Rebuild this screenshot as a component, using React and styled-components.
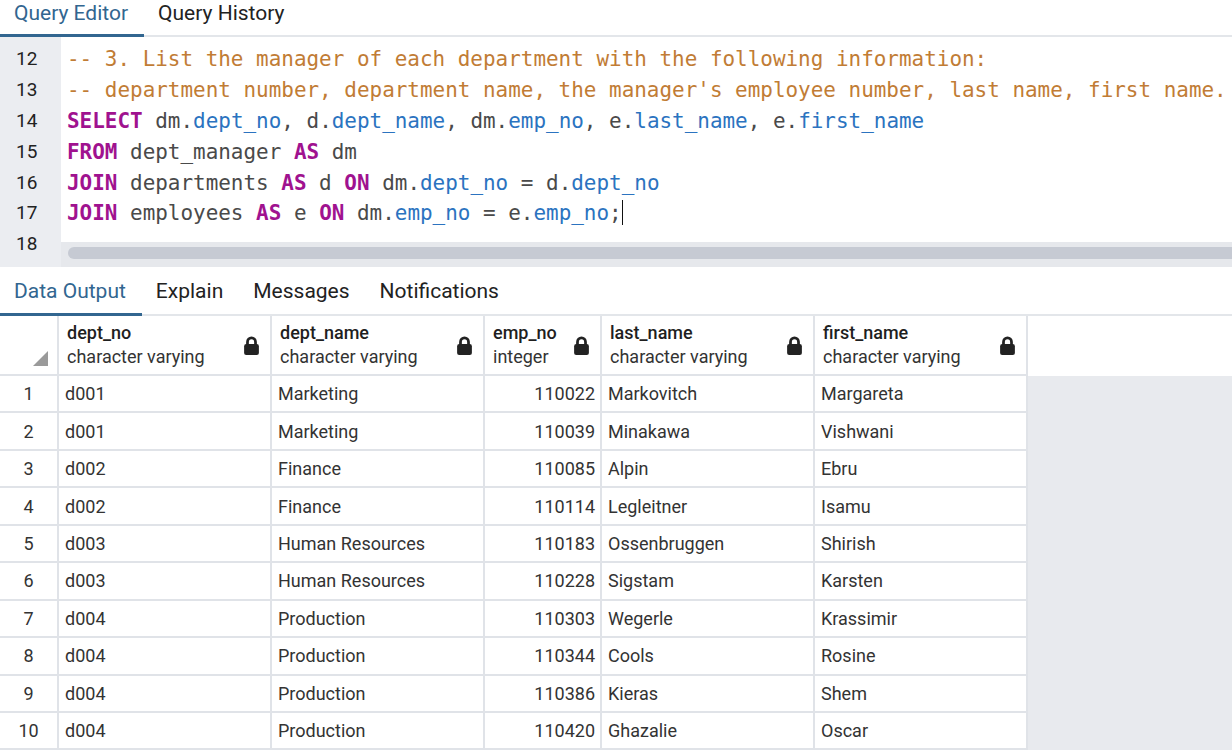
import React from 'react'
import styled, { createGlobalStyle } from 'styled-components'

const Global = createGlobalStyle`
  html, body { margin: 0; padding: 0; background: #fff; }
  body { font-family: Roboto, "Liberation Sans", sans-serif; overflow: hidden; }
  * { box-sizing: border-box; }
`

const Page = styled.div`
  width: 1232px;
  height: 751px;
  overflow: hidden;
  background: #fff;
`

const TabBar = styled.div`
  display: flex;
  border-bottom: 2px solid #e3e6ea;
  padding-top: ${p => p.top}px;
  height: ${p => p.height}px;
`

const Tab = styled.div`
  padding: 0 16px 0 14px;
  font-size: 21px;
  color: ${p => (p.active ? '#326690' : '#222')};
  border-bottom: 3px solid ${p => (p.active ? '#326690' : 'transparent')};
  display: flex;
  align-items: ${p => p.align || 'center'};
  line-height: 26px;
  margin-bottom: -2px;
`

const Editor = styled.div`
  display: grid;
  grid-template-columns: 61px 1fr;
  height: 230px;
`

const Gutter = styled.div`
  background: #ebedf1;
  padding-top: 7.4px;
`

const LineNo = styled.div`
  height: 30.8px;
  line-height: 30.8px;
  font-size: 19px;
  color: #222;
  padding-left: 16px;
`

const Code = styled.div`
  display: flex;
  flex-direction: column;
  padding-top: 7.4px;
  min-width: 0;
`

const CodeLine = styled.div`
  height: 30.8px;
  line-height: 30.8px;
  font-family: "DejaVu Sans Mono", "Liberation Mono", monospace;
  font-size: 20.95px;
  color: #4a4a4a;
  padding-left: 6px;
  white-space: pre;
`

const Cm = styled.span` color: #c17c35; `
const Kw = styled.span` color: #a0128f; font-weight: bold; `
const Id = styled.span` color: #2b73c0; `

const Caret = styled.span`
  display: inline-block;
  width: 1px;
  height: 25px;
  background: #111;
  vertical-align: middle;
  margin-top: -3px;
`

const Filler = styled.div`
  height: 12.6px;
`

const ScrollTrack = styled.div`
  height: 25px;
  background: #e6e8ec;
  padding: 5px 0 0 7px;
`

const Thumb = styled.div`
  height: 12px;
  background: #c6cad3;
  border-radius: 6px 0 0 6px;
`

const Grid = styled.div`
  display: flex;
  flex-direction: column;
`

const Row = styled.div`
  display: grid;
  grid-template-columns: 59px 213px 213px 117px 213px 213px 1fr;
  height: ${p => (p.head ? 60 : 37.45)}px;
`

const Cell = styled.div`
  border-right: 2px solid #e0e3e8;
  border-bottom: 2px solid #e0e3e8;
  font-size: 18px;
  color: #333;
  display: flex;
  align-items: center;
  padding: 0 6px;
  justify-content: ${p => (p.num ? 'flex-end' : p.center ? 'center' : 'flex-start')};
  padding-right: ${p => (p.num ? 5 : 6)}px;
  white-space: nowrap;
`

const Blank = styled.div`
  background: ${p => (p.head ? '#fff' : '#e8eaee')};
`

const HeadCell = styled.div`
  border-right: 2px solid #e0e3e8;
  border-bottom: 2px solid #e0e3e8;
  display: flex;
  align-items: center;
  justify-content: space-between;
  padding: 0 10px 0 8px;
`

const Corner = styled.div`
  border-right: 2px solid #e0e3e8;
  border-bottom: 2px solid #e0e3e8;
  position: relative;
`

const Triangle = styled.div`
  position: absolute;
  right: 9px;
  bottom: 8px;
  width: 0;
  height: 0;
  border-left: 15px solid transparent;
  border-bottom: 15px solid #9a9a9a;
`

const HeadText = styled.div`
  display: flex;
  flex-direction: column;
  line-height: 24px;
  font-size: 18px;
`

const ColName = styled.span`
  font-weight: 500;
  color: #1f1f1f;
`

const ColType = styled.span`
  color: #333;
`

const Lock = () => (
  <svg width="17" height="19" viewBox="0 0 16 18">
    <path d="M4.2 8.5V5.6a3.8 3.8 0 0 1 7.6 0v2.9" fill="none" stroke="#222" strokeWidth="2.6" />
    <rect x="1" y="7.6" width="14" height="10.4" rx="2" fill="#222" />
  </svg>
)

const columns = [
  { name: 'dept_no', type: 'character varying' },
  { name: 'dept_name', type: 'character varying' },
  { name: 'emp_no', type: 'integer' },
  { name: 'last_name', type: 'character varying' },
  { name: 'first_name', type: 'character varying' },
]

const rows = [
  ['d001', 'Marketing', '110022', 'Markovitch', 'Margareta'],
  ['d001', 'Marketing', '110039', 'Minakawa', 'Vishwani'],
  ['d002', 'Finance', '110085', 'Alpin', 'Ebru'],
  ['d002', 'Finance', '110114', 'Legleitner', 'Isamu'],
  ['d003', 'Human Resources', '110183', 'Ossenbruggen', 'Shirish'],
  ['d003', 'Human Resources', '110228', 'Sigstam', 'Karsten'],
  ['d004', 'Production', '110303', 'Wegerle', 'Krassimir'],
  ['d004', 'Production', '110344', 'Cools', 'Rosine'],
  ['d004', 'Production', '110386', 'Kieras', 'Shem'],
  ['d004', 'Production', '110420', 'Ghazalie', 'Oscar'],
]

const App = () => {
  return (
    <Page>
      <Global />
      <TabBar height={37} top={0}>
        <Tab active align="flex-start">Query Editor</Tab>
        <Tab align="flex-start">Query History</Tab>
      </TabBar>

      <Editor>
        <Gutter>
          {[12, 13, 14, 15, 16, 17, 18].map(n => <LineNo key={n}>{n}</LineNo>)}
        </Gutter>
        <Code>
          <CodeLine><Cm>-- 3. List the manager of each department with the following information:</Cm></CodeLine>
          <CodeLine><Cm>-- department number, department name, the manager's employee number, last name, first name.</Cm></CodeLine>
          <CodeLine><Kw>SELECT</Kw> dm.<Id>dept_no</Id>, d.<Id>dept_name</Id>, dm.<Id>emp_no</Id>, e.<Id>last_name</Id>, e.<Id>first_name</Id></CodeLine>
          <CodeLine><Kw>FROM</Kw> dept_manager <Kw>AS</Kw> dm</CodeLine>
          <CodeLine><Kw>JOIN</Kw> departments <Kw>AS</Kw> d <Kw>ON</Kw> dm.<Id>dept_no</Id> = d.<Id>dept_no</Id></CodeLine>
          <CodeLine><Kw>JOIN</Kw> employees <Kw>AS</Kw> e <Kw>ON</Kw> dm.<Id>emp_no</Id> = e.<Id>emp_no</Id>;<Caret /></CodeLine>
          <Filler />
          <ScrollTrack><Thumb /></ScrollTrack>
        </Code>
      </Editor>

      <TabBar height={49} top={1}>
        <Tab active>Data Output</Tab>
        <Tab>Explain</Tab>
        <Tab>Messages</Tab>
        <Tab>Notifications</Tab>
      </TabBar>

      <Grid>
        <Row head>
          <Corner><Triangle /></Corner>
          {columns.map(c => (
            <HeadCell key={c.name}>
              <HeadText>
                <ColName>{c.name}</ColName>
                <ColType>{c.type}</ColType>
              </HeadText>
              <Lock />
            </HeadCell>
          ))}
          <Blank head />
        </Row>
        {rows.map((r, i) => (
          <Row key={i}>
            <Cell center>{i + 1}</Cell>
            <Cell>{r[0]}</Cell>
            <Cell>{r[1]}</Cell>
            <Cell num>{r[2]}</Cell>
            <Cell>{r[3]}</Cell>
            <Cell>{r[4]}</Cell>
            <Blank />
          </Row>
        ))}
      </Grid>
    </Page>
  )
}

export default App
